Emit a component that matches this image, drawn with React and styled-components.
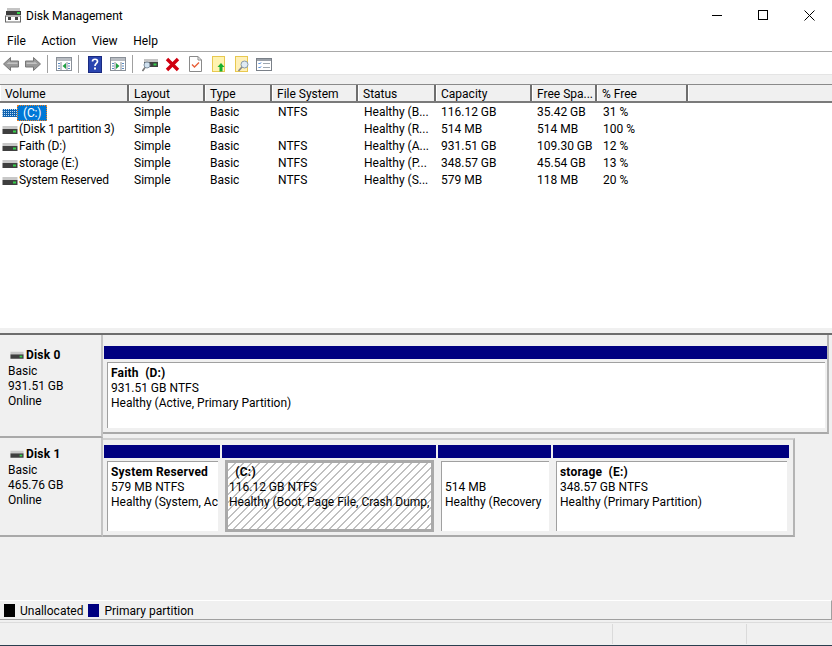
import React from "react";
import styled, { createGlobalStyle } from "styled-components";

const GlobalStyle = createGlobalStyle`
  html, body { margin: 0; padding: 0; background: #fff; }
  body { font-family: Roboto, "Open Sans", sans-serif; font-size: 12px; color: #000; }
`;

const Window = styled.div`
  width: 832px;
  height: 646px;
  display: flex;
  flex-direction: column;
  overflow: hidden;
  background: #f0f0f0;
  border-bottom: 1px solid #2b3f4f;
  box-sizing: border-box;
`;

const TitleBar = styled.div`
  height: 30px;
  flex: none;
  background: #fff;
  display: flex;
  align-items: center;
  padding-left: 5px;
`;
const TitleText = styled.span`
  flex: 1;
  font-size: 12px;
  margin-left: 5px;
  padding-top: 1px;
`;
const WinButton = styled.div`
  width: 46px;
  height: 30px;
  display: flex;
  align-items: center;
  justify-content: center;
`;

const MenuBar = styled.div`
  height: 22px;
  flex: none;
  background: #fff;
  display: flex;
  align-items: center;
  border-bottom: 1px solid #a9a9a9;
  padding-left: 7px;
  box-sizing: border-box;
  gap: 15.7px;
`;

const Toolbar = styled.div`
  height: 22px;
  flex: none;
  background: #fff;
  display: flex;
  align-items: center;
  padding: 2px 0 0 3px;
  box-sizing: border-box;
`;
const ToolIcon = styled.svg`
  flex: none;
  margin-right: ${(p) => p.$gap ?? 7}px;
`;
const ToolSep = styled.div`
  width: 1px;
  height: 18px;
  background: #a0a0a0;
  flex: none;
  margin-right: ${(p) => p.$gap ?? 8}px;
`;

const ListPanel = styled.div`
  height: 254px;
  flex: none;
  display: flex;
  flex-direction: column;
  padding-top: 9px;
  background: #f0f0f0;
  border-top: 1px solid #e4e4e4;
  box-sizing: border-box;
`;
const HeaderRow = styled.div`
  height: 19px;
  flex: none;
  display: flex;
  background: #f0f0f0;
  border-top: 1px solid #8a8a8a;
  border-bottom: 2px solid #7a7a7a;
  box-sizing: border-box;
`;
const HeaderCell = styled.div`
  width: ${(p) => p.$w}px;
  flex: none;
  box-sizing: border-box;
  padding: 1px 0 0 4px;
  line-height: 16px;
  border-left: 1px solid #fff;
  border-right: 2px solid #6e6e6e;
  white-space: nowrap;
  overflow: hidden;
`;
const HeaderRest = styled.div`
  flex: 1;
  border-left: 1px solid #fff;
  margin-right: 2px;
`;
const ListBody = styled.div`
  flex: 1;
  background: #fff;
  padding-top: 1px;
`;
const Row = styled.div`
  display: flex;
  height: 17px;
  line-height: 17px;
`;
const Cell = styled.div`
  width: ${(p) => p.$w}px;
  flex: none;
  box-sizing: border-box;
  padding-left: 5px;
  white-space: nowrap;
  overflow: hidden;
`;
const VolumeCell = styled.div`
  width: 129px;
  flex: none;
  display: flex;
  align-items: center;
  padding-left: 2px;
  box-sizing: border-box;
  gap: 1px;
  white-space: nowrap;
  letter-spacing: -0.15px;
`;
const Selected = styled.span`
  background: #0078d7;
  color: #fff;
  outline: 1px dotted #f08020;
  outline-offset: -1px;
  padding: 0 6px;
  height: 16px;
  line-height: 16px;
  margin-left: -2px;
`;

const Splitter = styled.div`
  height: 7px;
  flex: none;
  background: #f0f0f0;
  border-bottom: 2px solid #6d6d6d;
  box-sizing: border-box;
`;

const DiskArea = styled.div`
  flex: 1;
  display: flex;
  flex-direction: column;
  background: #f0f0f0;
  min-height: 0;
`;
const DiskRow = styled.div`
  display: flex;
  height: ${(p) => p.$h}px;
  flex: none;
`;
const DiskLabel = styled.div`
  width: 103px;
  flex: none;
  box-sizing: border-box;
  padding: ${(p) => p.$top}px 0 0 8px;
  line-height: 15px;
  border-right: 2px solid #c4c4c4;
  border-bottom: 2px solid #a9a9a9;
  white-space: nowrap;
`;
const DiskName = styled.div`
  display: flex;
  align-items: center;
  gap: 2px;
  font-weight: 700;
  letter-spacing: 0.2px;
  margin-left: 2px;
  margin-bottom: 1px;
`;
const Frame = styled.div`
  width: ${(p) => p.$w}px;
  flex: none;
  display: flex;
  box-sizing: border-box;
  padding: ${(p) => p.$top}px 0 0 1px;
  gap: 2px;
  border-top: ${(p) => (p.$outlined ? "2px solid #d0d0d0" : "none")};
  border-right: 2px solid #b4b4b4;
  border-bottom: 2px solid #a9a9a9;
  margin-bottom: ${(p) => p.$mb ?? 0}px;
`;
const Segment = styled.div`
  width: ${(p) => p.$w}px;
  flex: none;
  display: flex;
  flex-direction: column;
`;
const SegBar = styled.div`
  height: 13px;
  flex: none;
  background: #000080;
`;
const SegBody = styled.div`
  flex: 1;
  margin: 3px 2px 4px 3px;
  padding: 3px 0 0 3px;
  background: #fff;
  border-top: 1px solid #a0a0a0;
  border-left: 1px solid #a0a0a0;
  line-height: 15px;
  overflow: hidden;
  white-space: nowrap;
  min-width: 0;
`;
const SelectedBody = styled.div`
  flex: 1;
  margin: 2px 2px 3px 3px;
  padding: 2px 0 0 1px;
  border: 3px solid #a9a9a9;
  line-height: 15px;
  overflow: hidden;
  white-space: nowrap;
  min-width: 0;
  background: repeating-linear-gradient(135deg, #fff 0, #fff 4.66px, #c0c0c0 4.66px, #c0c0c0 5.66px);
`;
const PartName = styled.div`
  font-weight: 700;
  letter-spacing: 0.2px;
  white-space: pre;
  min-height: 15px;
`;

const Legend = styled.div`
  height: 20px;
  flex: none;
  display: flex;
  align-items: center;
  padding-left: 4px;
  background: #f0f0f0;
  border-top: 1px solid #fff;
  border-bottom: 1px solid #a0a0a0;
  border-right: 1px solid #a0a0a0;
  box-sizing: border-box;
`;
const Swatch = styled.span`
  width: 11px;
  height: 13px;
  flex: none;
  background: ${(p) => p.$color};
  margin-right: 5px;
`;
const LegendText = styled.span`
  margin-right: 5px;
  padding-top: 2px;
`;
const StatusBar = styled.div`
  height: 23px;
  flex: none;
  display: flex;
  justify-content: flex-end;
  border-top: 1px solid #dcdcdc;
  margin-top: 2px;
  box-sizing: border-box;
`;
const StatusCell = styled.div`
  width: ${(p) => p.$w}px;
  margin-top: 1px;
  margin-bottom: 1px;
  border-left: 1px solid #dadada;
  box-sizing: border-box;
`;

const Drive = ({ size = 16 }) => (
  <svg width={size} height={size * 0.75} viewBox="0 0 16 12">
    <rect x="0.5" y="2" width="15" height="3" fill="#c8c8c8" />
    <rect x="0.5" y="5" width="15" height="5" fill="#3f3f3f" />
    <rect x="11" y="6.5" width="3" height="2" fill="#35d04a" />
  </svg>
);

const HatchDrive = () => (
  <svg width="16" height="12" viewBox="0 0 16 12">
    <defs>
      <pattern id="chk" width="2" height="2" patternUnits="userSpaceOnUse">
        <rect width="2" height="2" fill="#0f62b0" />
        <rect width="1" height="1" fill="#bcdcf5" />
      </pattern>
    </defs>
    <rect x="0.5" y="2" width="15" height="8" fill="url(#chk)" />
  </svg>
);

const BackIcon = ({ flip }) => (
  <ToolIcon width="16" height="16" viewBox="0 0 16 16" $gap={6} style={flip ? { transform: "scaleX(-1)" } : undefined}>
    <path d="M0.5 8 L7.5 1.5 V5 H15.5 V11 H7.5 V14.5 Z" fill="#9a9a9a" stroke="#777" />
    <path d="M3.5 8 L6.5 5.5 V6.5 H14.5 V8 Z" fill="#c4c4c4" />
  </ToolIcon>
);

const PanelIcon = ({ side }) => (
  <ToolIcon width="16" height="14" viewBox="0 0 16 14" $gap={6}>
    <rect x="0.5" y="0.5" width="15" height="13" fill="#fff" stroke="#8a9098" />
    <rect x="1" y="1" width="14" height="3" fill="#b8bcc2" />
    <path d="M5 5 V13 M11 5 V13" stroke="#8a9098" />
    <path d="M2 6.5 H4 M2 9 H4 M2 11.5 H4 M12 6.5 H14 M12 9 H14 M12 11.5 H14" stroke="#5a8ac0" />
    {side === "left" ? (
      <path d="M10 6 V12 L6.5 9 Z" fill="#20a040" />
    ) : (
      <path d="M6 6 V12 L9.5 9 Z" fill="#20a040" />
    )}
  </ToolIcon>
);

const HelpIcon = () => (
  <ToolIcon width="14" height="17" viewBox="0 0 14 17" $gap={8}>
    <rect x="0.5" y="0.5" width="13" height="16" fill="#2a45b0" stroke="#1a2a80" />
    <path d="M4.5 5.5 C4.5 2.5 9.5 2.5 9.5 5.5 C9.5 7.5 7 7.5 7 10" fill="none" stroke="#fff" strokeWidth="1.7" />
    <rect x="6" y="11.5" width="2" height="2" fill="#fff" />
  </ToolIcon>
);

const ConnectIcon = () => (
  <ToolIcon width="16" height="15" viewBox="0 0 16 15" $gap={7}>
    <rect x="2" y="2" width="14" height="3" fill="#c4c4c4" />
    <rect x="2" y="5" width="14" height="5" fill="#404040" />
    <rect x="11.5" y="6.5" width="3" height="2" fill="#35d04a" />
    <circle cx="5" cy="8" r="3" fill="#cfe0ee" stroke="#8090a0" />
    <path d="M3 10.5 L0.5 14" stroke="#777" strokeWidth="1.6" />
  </ToolIcon>
);

const DeleteIcon = () => (
  <ToolIcon width="15" height="15" viewBox="0 0 15 15" $gap={9}>
    <path d="M2 2 L13 13 M13 2 L2 13" stroke="#d00010" strokeWidth="3.4" />
  </ToolIcon>
);

const CheckDocIcon = () => (
  <ToolIcon width="13" height="16" viewBox="0 0 13 16" $gap={10}>
    <path d="M0.5 0.5 H9 L12.5 4 V15.5 H0.5 Z" fill="#fff" stroke="#8a8a8a" />
    <path d="M9 0.5 V4 H12.5" fill="none" stroke="#8a8a8a" />
    <path d="M3 8.5 L5.5 11 L10 6.5" fill="none" stroke="#e8603a" strokeWidth="1.4" />
  </ToolIcon>
);

const FolderUpIcon = () => (
  <ToolIcon width="13" height="16" viewBox="0 0 13 16" $gap={10}>
    <rect x="0.5" y="0.5" width="12" height="15" fill="#fff3b0" stroke="#e8c850" />
    <path d="M9 7 L12.5 11 H10.5 V15.5 H7.5 V11 H5.5 Z" fill="#18b030" />
  </ToolIcon>
);

const FolderFindIcon = () => (
  <ToolIcon width="14" height="16" viewBox="0 0 14 16" $gap={7}>
    <rect x="0.5" y="0.5" width="12" height="15" fill="#fff0b8" stroke="#e8c850" />
    <circle cx="9.5" cy="8.5" r="3.5" fill="#dfeaf4" stroke="#8a9aa8" />
    <path d="M7 11 L3.5 15" stroke="#888" strokeWidth="1.6" />
  </ToolIcon>
);

const TaskIcon = () => (
  <ToolIcon width="16" height="13" viewBox="0 0 16 13">
    <rect x="0.5" y="0.5" width="15" height="12" fill="#fff" stroke="#7a8088" />
    <rect x="1" y="1" width="14" height="2" fill="#9aa0a8" />
    <path d="M2.5 5 L3.5 6 L5 4.5 M2.5 9 L3.5 10 L5 8.5" fill="none" stroke="#2a70d0" />
    <path d="M7 5.5 H14 M7 9.5 H14" stroke="#a0a8b0" />
  </ToolIcon>
);

const AppIcon = () => (
  <svg width="16" height="16" viewBox="0 0 16 16">
    <rect x="2" y="1" width="13" height="3" fill="#c4c4c4" />
    <rect x="1" y="4" width="15" height="4" fill="#3c3c3c" />
    <rect x="12" y="5" width="3" height="2" fill="#35d04a" />
    <rect x="0.5" y="9" width="15" height="6" fill="#fff" stroke="#666" />
    <rect x="3" y="10" width="3" height="3" fill="#444" />
    <rect x="10" y="10" width="3" height="3" fill="#444" />
  </svg>
);

const headerWidths = [129, 76, 67, 86, 78, 96, 65, 91];
const rowWidths = [129, 76, 68, 86, 77, 96, 66, 91];
const headers = ["Volume", "Layout", "Type", "File System", "Status", "Capacity", "Free Spa...", "% Free"];
const volumes = [
  ["(C:)", "Simple", "Basic", "NTFS", "Healthy (B...", "116.12 GB", "35.42 GB", "31 %"],
  ["(Disk 1 partition 3)", "Simple", "Basic", "", "Healthy (R...", "514 MB", "514 MB", "100 %"],
  ["Faith (D:)", "Simple", "Basic", "NTFS", "Healthy (A...", "931.51 GB", "109.30 GB", "12 %"],
  ["storage (E:)", "Simple", "Basic", "NTFS", "Healthy (P...", "348.57 GB", "45.54 GB", "13 %"],
  ["System Reserved", "Simple", "Basic", "NTFS", "Healthy (S...", "579 MB", "118 MB", "20 %"],
];

const Partition = ({ w, name, size, status, selected }) => {
  const Body = selected ? SelectedBody : SegBody;
  return (
    <Segment $w={w}>
      <SegBar />
      <Body>
        <PartName>{name}</PartName>
        <div>{size}</div>
        <div>{status}</div>
      </Body>
    </Segment>
  );
};

export default function App() {
  return (
    <Window>
      <GlobalStyle />
      <TitleBar>
        <AppIcon />
        <TitleText>Disk Management</TitleText>
        <WinButton>
          <svg width="10" height="10" viewBox="0 0 10 10"><path d="M0 5.5 H10" stroke="#000" /></svg>
        </WinButton>
        <WinButton>
          <svg width="10" height="10" viewBox="0 0 10 10"><rect x="0.5" y="0.5" width="9" height="9" fill="none" stroke="#000" /></svg>
        </WinButton>
        <WinButton>
          <svg width="11" height="11" viewBox="0 0 11 11"><path d="M0.5 0.5 L10.5 10.5 M10.5 0.5 L0.5 10.5" stroke="#000" /></svg>
        </WinButton>
      </TitleBar>
      <MenuBar>
        <span>File</span>
        <span>Action</span>
        <span>View</span>
        <span>Help</span>
      </MenuBar>
      <Toolbar>
        <BackIcon />
        <BackIcon flip />
        <ToolSep />
        <PanelIcon side="left" />
        <ToolSep $gap={9} />
        <HelpIcon />
        <PanelIcon side="right" />
        <ToolSep $gap={9} />
        <ConnectIcon />
        <DeleteIcon />
        <CheckDocIcon />
        <FolderUpIcon />
        <FolderFindIcon />
        <TaskIcon />
      </Toolbar>
      <ListPanel>
        <HeaderRow>
          {headers.map((h, i) => (
            <HeaderCell key={h} $w={headerWidths[i]}>{h}</HeaderCell>
          ))}
          <HeaderRest />
        </HeaderRow>
        <ListBody>
          {volumes.map((v, r) => (
            <Row key={v[0]}>
              <VolumeCell>
                {r === 0 ? <HatchDrive /> : <Drive />}
                {r === 0 ? <Selected>{v[0]}</Selected> : <span>{v[0]}</span>}
              </VolumeCell>
              {v.slice(1).map((c, i) => (
                <Cell key={i} $w={rowWidths[i + 1]}>{c}</Cell>
              ))}
            </Row>
          ))}
        </ListBody>
      </ListPanel>
      <Splitter />
      <DiskArea>
        <DiskRow $h={103}>
          <DiskLabel $top={13}>
            <DiskName><Drive size={14} />Disk 0</DiskName>
            <div>Basic</div>
            <div>931.51 GB</div>
            <div>Online</div>
          </DiskLabel>
          <Frame $w={726} $top={11} $mb={4}>
            <Partition w={723} name="Faith  (D:)" size="931.51 GB NTFS" status="Healthy (Active, Primary Partition)" />
          </Frame>
        </DiskRow>
        <DiskRow $h={99}>
          <DiskLabel $top={9}>
            <DiskName><Drive size={14} />Disk 1</DiskName>
            <div>Basic</div>
            <div>465.76 GB</div>
            <div>Online</div>
          </DiskLabel>
          <Frame $w={692} $top={5} $outlined>
            <Partition w={116} name="System Reserved" size="579 MB NTFS" status="Healthy (System, Ac" />
            <Partition w={214} name="  (C:)" size="116.12 GB NTFS" status="Healthy (Boot, Page File, Crash Dump," selected />
            <Partition w={113} name="" size="514 MB" status="Healthy (Recovery" />
            <Partition w={236} name="storage  (E:)" size="348.57 GB NTFS" status="Healthy (Primary Partition)" />
          </Frame>
        </DiskRow>
      </DiskArea>
      <Legend>
        <Swatch $color="#000" />
        <LegendText>Unallocated</LegendText>
        <Swatch $color="#000080" />
        <LegendText>Primary partition</LegendText>
      </Legend>
      <StatusBar>
        <StatusCell $w={134} />
        <StatusCell $w={86} />
      </StatusBar>
    </Window>
  );
}
